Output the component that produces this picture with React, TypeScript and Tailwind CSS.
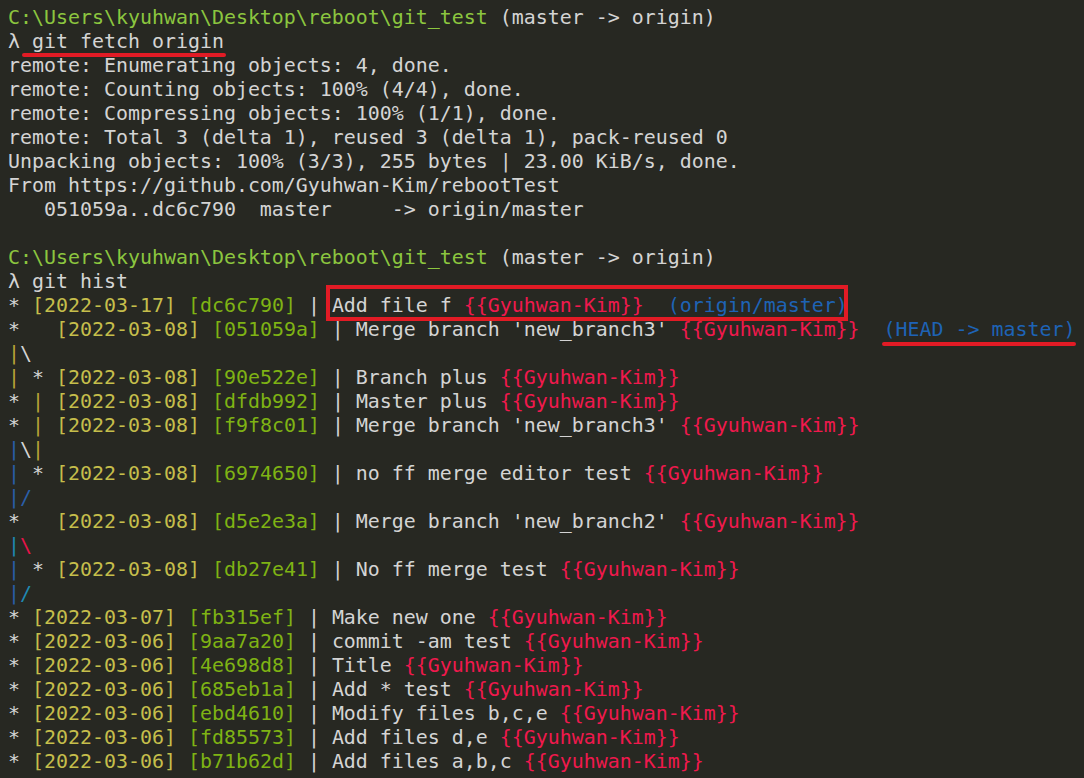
import React from "react";

type Seg = [string, string];

const W = "text-[#d4d4d4]";
const G = "text-[#8cc63f]";
const Y = "text-[#c5be4b]";
const H = "text-[#7fb314]";
const R = "text-[#f0194d]";
const B = "text-[#1e63b5]";
const GOLD = "text-[#b8a436]";
const BL = "text-[#2a5fa8]";
const TE = "text-[#1f8ab3]";
const RD = "text-[#e8134a]";

function Line({ segs, children }: { segs: Seg[]; children?: React.ReactNode }) {
  return (
    <div className="relative h-[24px] leading-[24px] whitespace-pre">
      {segs.map((s, i) => (
        <span key={i} className={s[1]}>
          {s[0]}
        </span>
      ))}
      {children}
    </div>
  );
}

const prompt: Seg[] = [
  ["C:\\Users\\kyuhwan\\Desktop\\reboot\\git_test", G],
  [" (master -> origin)", W],
];

function commit(graph: Seg[], date: string, hash: string, msg: string, ref?: string): Seg[] {
  const s: Seg[] = [
    ...graph,
    [`[${date}]`, Y],
    [" ", W],
    [`[${hash}]`, H],
    [" | ", W],
    [msg + " ", W],
    ["{{Gyuhwan-Kim}}", R],
  ];
  if (ref) s.push([`  (${ref})`, B]);
  return s;
}

const star: Seg[] = [["* ", W]];

export default function App() {
  return (
    <div
      className="w-[1084px] h-[778px] overflow-hidden bg-[#272822] pt-[6px] pl-[8px] text-[19.93px] text-[#d4d4d4]"
      style={{ fontFamily: '"DejaVu Sans Mono", "Liberation Mono", monospace' }}
    >
      <Line segs={prompt} />
      <Line segs={[["λ git fetch origin", W]]}>
        <div className="absolute left-[14px] top-[23px] w-[204px] h-[4px] rounded-full bg-[#e21b25]" />
      </Line>
      <Line segs={[["remote: Enumerating objects: 4, done.", W]]} />
      <Line segs={[["remote: Counting objects: 100% (4/4), done.", W]]} />
      <Line segs={[["remote: Compressing objects: 100% (1/1), done.", W]]} />
      <Line segs={[["remote: Total 3 (delta 1), reused 3 (delta 1), pack-reused 0", W]]} />
      <Line segs={[["Unpacking objects: 100% (3/3), 255 bytes | 23.00 KiB/s, done.", W]]} />
      <Line segs={[["From https://github.com/Gyuhwan-Kim/rebootTest", W]]} />
      <Line segs={[["   051059a..dc6c790  master     -> origin/master", W]]} />
      <Line segs={[[" ", W]]} />
      <Line segs={prompt} />
      <Line segs={[["λ git hist", W]]} />
      <Line segs={commit(star, "2022-03-17", "dc6c790", "Add file f", "origin/master")}>
        <div className="absolute left-[318px] top-[-9px] w-[522px] h-[36px] border-[4px] border-[#e21b25]" />
      </Line>
      <Line segs={commit([["*   ", W]], "2022-03-08", "051059a", "Merge branch 'new_branch3'", "HEAD -> master")}>
        <div className="absolute left-[874px] top-[24px] w-[194px] h-[4px] rounded-full bg-[#e21b25]" />
      </Line>
      <Line segs={[["|", GOLD], ["\\", W]]} />
      <Line segs={commit([["|", GOLD], [" * ", W]], "2022-03-08", "90e522e", "Branch plus")} />
      <Line segs={commit([["* ", W], ["|", GOLD], [" ", W]], "2022-03-08", "dfdb992", "Master plus")} />
      <Line segs={commit([["* ", W], ["|", GOLD], [" ", W]], "2022-03-08", "f9f8c01", "Merge branch 'new_branch3'")} />
      <Line segs={[["|", BL], ["\\", W], ["|", GOLD]]} />
      <Line segs={commit([["|", BL], [" * ", W]], "2022-03-08", "6974650", "no ff merge editor test")} />
      <Line segs={[["|", BL], ["/", BL]]} />
      <Line segs={commit([["*   ", W]], "2022-03-08", "d5e2e3a", "Merge branch 'new_branch2'")} />
      <Line segs={[["|", TE], ["\\", RD]]} />
      <Line segs={commit([["|", BL], [" * ", W]], "2022-03-08", "db27e41", "No ff merge test")} />
      <Line segs={[["|", BL], ["/", TE]]} />
      <Line segs={commit(star, "2022-03-07", "fb315ef", "Make new one")} />
      <Line segs={commit(star, "2022-03-06", "9aa7a20", "commit -am test")} />
      <Line segs={commit(star, "2022-03-06", "4e698d8", "Title")} />
      <Line segs={commit(star, "2022-03-06", "685eb1a", "Add * test")} />
      <Line segs={commit(star, "2022-03-06", "ebd4610", "Modify files b,c,e")} />
      <Line segs={commit(star, "2022-03-06", "fd85573", "Add files d,e")} />
      <Line segs={commit(star, "2022-03-06", "b71b62d", "Add files a,b,c")} />
    </div>
  );
}
